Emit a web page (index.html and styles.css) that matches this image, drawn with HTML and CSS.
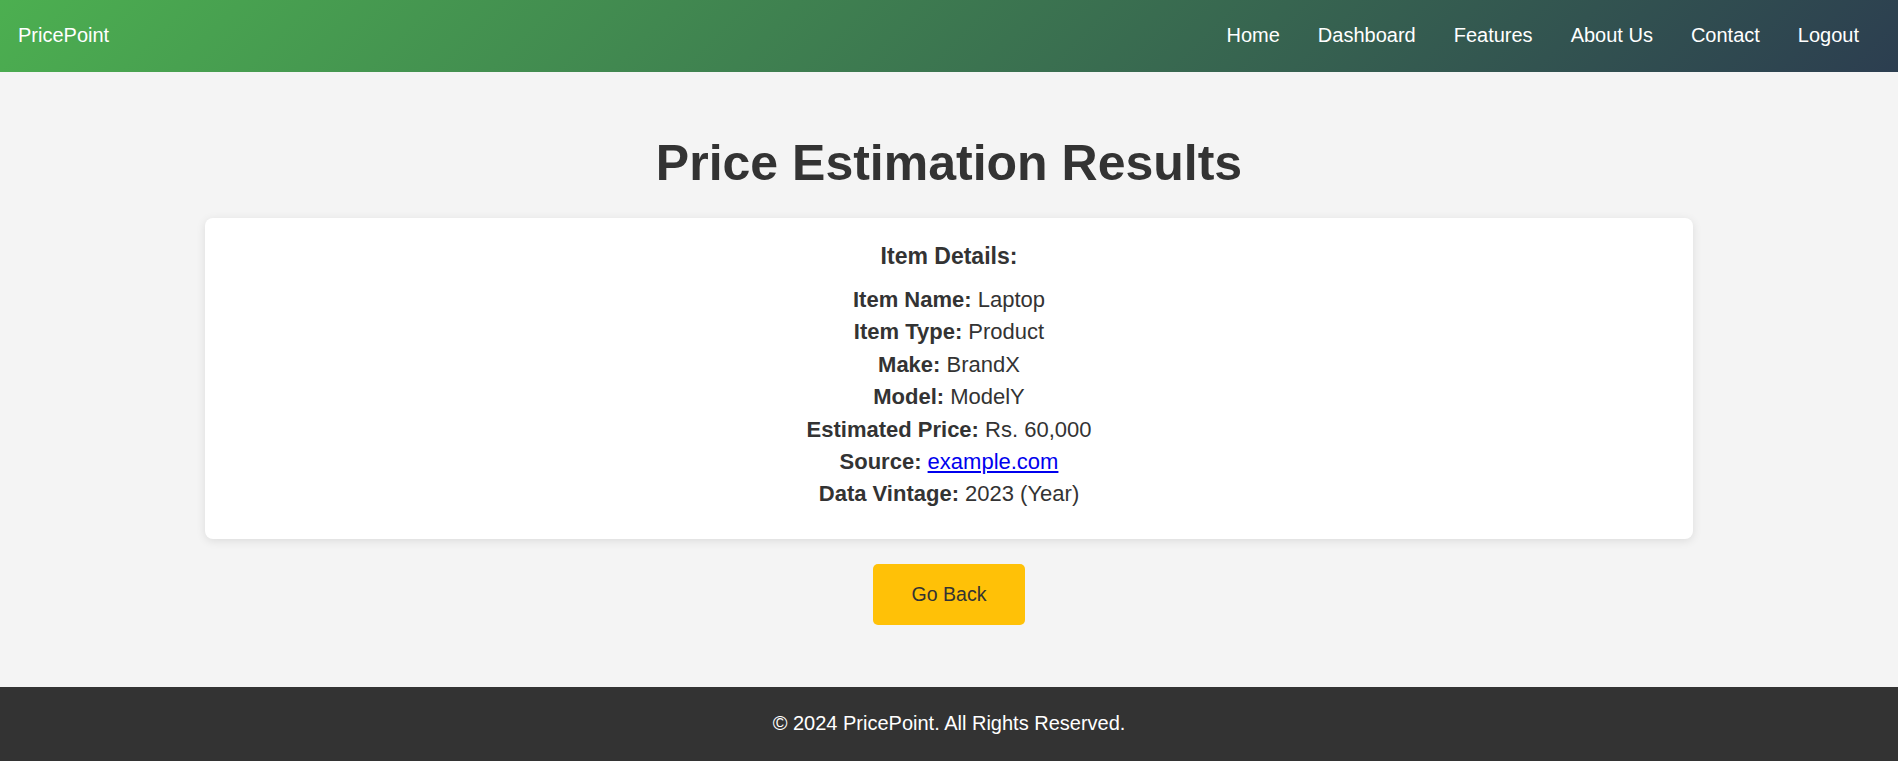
FILE: index.html
```html
<!DOCTYPE html>
<html lang="en">
<head>
<meta charset="UTF-8">
<title>Price Estimation Results - PricePoint</title>
<link rel="stylesheet" href="styles.css">
</head>
<body>
<header class="site-header">
  <a class="logo" href="#">PricePoint</a>
  <nav class="main-nav">
    <a href="#">Home</a>
    <a href="#">Dashboard</a>
    <a href="#">Features</a>
    <a href="#">About Us</a>
    <a href="#">Contact</a>
    <a href="#">Logout</a>
  </nav>
</header>
<main class="content">
  <h1 class="page-title">Price Estimation Results</h1>
  <section class="result-card">
    <h3 class="card-title">Item Details:</h3>
    <p class="row"><strong>Item Name:</strong> Laptop</p>
    <p class="row"><strong>Item Type:</strong> Product</p>
    <p class="row"><strong>Make:</strong> BrandX</p>
    <p class="row"><strong>Model:</strong> ModelY</p>
    <p class="row"><strong>Estimated Price:</strong> Rs. 60,000</p>
    <p class="row"><strong>Source:</strong> <a class="source-link" href="#">example.com</a></p>
    <p class="row"><strong>Data Vintage:</strong> 2023 (Year)</p>
  </section>
  <a class="back-btn" href="#">Go Back</a>
</main>
<footer class="site-footer">
  <p>&copy; 2024 PricePoint. All Rights Reserved.</p>
</footer>
</body>
</html>
```

FILE: styles.css
```css
* { box-sizing: border-box; }

html, body {
  margin: 0;
  padding: 0;
}

body {
  font-family: "Liberation Sans", Arial, sans-serif;
  background: #f4f4f4;
  color: #333;
  min-height: 100vh;
  display: flex;
  flex-direction: column;
}

.site-header {
  height: 72px;
  flex: 0 0 72px;
  display: flex;
  align-items: center;
  justify-content: space-between;
  padding: 0 20px 2px 18px;
  background: linear-gradient(135deg, #4CAF50, #2C3E50);
}

.logo {
  color: #fff;
  text-decoration: none;
  font-size: 20px;
  line-height: 23px;
}

.main-nav {
  display: flex;
  align-items: center;
}

.main-nav a {
  color: #fff;
  text-decoration: none;
  font-size: 20px;
  line-height: 23px;
  margin: 0 19px;
}

.content {
  flex: 1 0 auto;
  display: flex;
  flex-direction: column;
  align-items: center;
  padding: 63px 0 0;
}

.page-title {
  margin: 0 0 25px;
  font-size: 50px;
  line-height: 57.5px;
  font-weight: bold;
  color: #333;
  text-align: center;
}

.result-card {
  width: 1488px;
  max-width: calc(100% - 40px);
  background: #fff;
  border-radius: 8px;
  box-shadow: 0 2px 10px rgba(0, 0, 0, 0.1);
  padding: 25px 20px 28px;
  text-align: center;
}

.card-title {
  margin: 0 0 15px;
  font-size: 23px;
  line-height: 26.4px;
  font-weight: bold;
}

.row {
  margin: 0;
  font-size: 22px;
  line-height: 32.4px;
}

.source-link {
  color: #0000EE;
  text-decoration: underline;
}

.back-btn {
  margin-top: 25px;
  display: inline-block;
  background: #FFC107;
  color: #333;
  text-decoration: none;
  font-size: 19.5px;
  line-height: 23px;
  padding: 19px 39px;
  border-radius: 5px;
}

.site-footer {
  flex: 0 0 74px;
  height: 74px;
  background: #333;
  color: #fff;
  text-align: center;
  padding: 25px 0 0;
}

.site-footer p {
  margin: 0;
  font-size: 20px;
  line-height: 23px;
}
```
